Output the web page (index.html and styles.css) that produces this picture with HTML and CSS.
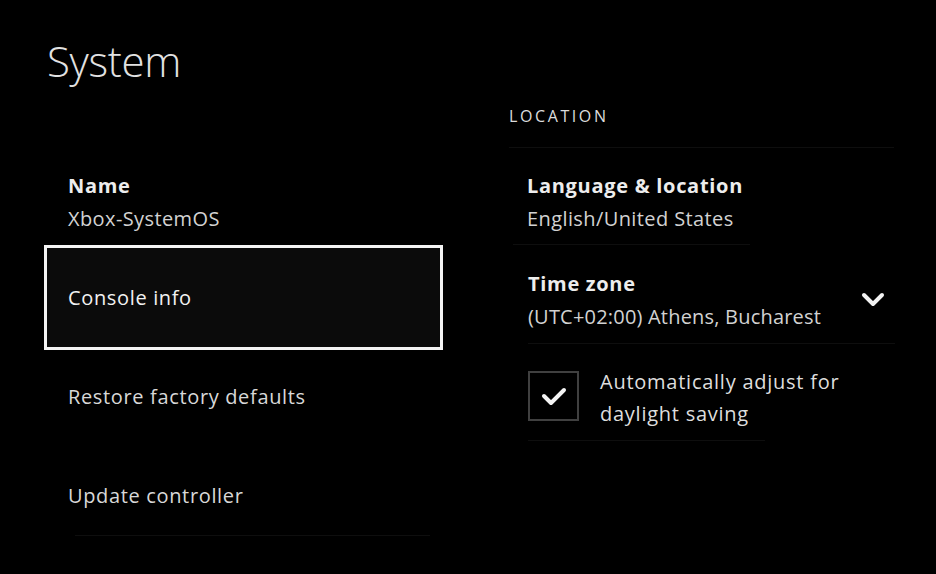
FILE: index.html
```html
<!DOCTYPE html>
<html lang="en">
<head>
<meta charset="utf-8">
<title>System</title>
<link rel="stylesheet" href="styles.css">
</head>
<body>
<div class="page">
  <div class="col-left">
    <h1 class="title">System</h1>
    <div class="field">
      <div class="label">Name</div>
      <div class="value">Xbox-SystemOS</div>
    </div>
    <div class="menu">
      <div class="menu-item focused">Console info</div>
      <div class="menu-item">Restore factory defaults</div>
      <div class="menu-item">Update controller</div>
    </div>
    <div class="sep sep-left"></div>
  </div>
  <div class="col-right">
    <div class="section">LOCATION</div>
    <div class="sep sep-full"></div>
    <div class="field field-right">
      <div class="label">Language &amp; location</div>
      <div class="value">English/United States</div>
    </div>
    <div class="sep sep-short"></div>
    <div class="field field-right field-drop">
      <div class="drop-text">
        <div class="label">Time zone</div>
        <div class="value">(UTC+02:00) Athens, Bucharest</div>
      </div>
      <svg class="chevron" width="24" height="16" viewBox="0 0 24 16">
        <polyline points="3,3 12,12 21,3" fill="none" stroke="#f2f2f2" stroke-width="4" stroke-linecap="round" stroke-linejoin="round"/>
      </svg>
    </div>
    <div class="sep sep-tz"></div>
    <div class="check-row">
      <div class="checkbox">
        <svg width="28" height="22" viewBox="0 0 28 22">
          <polyline points="4,11 11,18 24,5" fill="none" stroke="#f4f4f4" stroke-width="4" stroke-linecap="round" stroke-linejoin="round"/>
        </svg>
      </div>
      <div class="check-text">Automatically adjust for<br>daylight saving</div>
    </div>
    <div class="sep sep-check"></div>
  </div>
</div>
</body>
</html>
```

FILE: styles.css
```css
* { box-sizing: border-box; }
html, body {
  margin: 0;
  padding: 0;
  background: #000;
  width: 936px;
  height: 574px;
  overflow: hidden;
}
body {
  font-family: "Open Sans", "Noto Sans", sans-serif;
  color: #ececec;
}
.page {
  display: flex;
  align-items: flex-start;
  padding-left: 44px;
}
.col-left {
  width: 399px;
  display: flex;
  flex-direction: column;
}
.title {
  margin: 35px 0 0 3px;
  font-size: 42px;
  line-height: 52px;
  font-weight: 300;
  color: #e2e2e2;
  letter-spacing: -0.3px;
}
.field {
  display: flex;
  flex-direction: column;
  padding-left: 24px;
  margin-top: 82px;
}
.label {
  font-size: 20px;
  line-height: 33px;
  font-weight: 700;
  letter-spacing: 0.7px;
  color: #ededed;
}
.value {
  font-size: 20px;
  line-height: 33px;
  font-weight: 400;
  letter-spacing: 0.4px;
  color: #d2d2d2;
}
.menu {
  display: flex;
  flex-direction: column;
  margin-top: 13px;
  padding: 0 3px;
}
.menu-item {
  height: 99px;
  display: flex;
  align-items: center;
  padding-left: 21px;
  font-size: 20px;
  letter-spacing: 0.65px;
  color: #d8d8d8;
}
.menu-item.focused {
  outline: 3px solid #f4f4f4;
  background: #0b0b0b;
  color: #f2f2f2;
}
.sep {
  height: 1px;
  background: #0e0e0e;
}
.sep-left {
  margin: -10px 0 0 31px;
  width: 355px;
}
.col-right {
  margin-left: 66px;
  width: 386px;
  display: flex;
  flex-direction: column;
}
.section {
  margin-top: 106px;
  font-size: 16px;
  line-height: 20px;
  letter-spacing: 2.6px;
  color: #dcdcdc;
}
.sep-full {
  margin-top: 21px;
  width: 385px;
}
.field-right {
  margin-top: 21px;
  padding-left: 18px;
}
.sep-short {
  margin: 9px 0 0 4px;
  width: 237px;
}
.field-drop {
  flex-direction: row;
  align-items: center;
  justify-content: space-between;
  margin-top: 22px;
  padding-left: 19px;
  padding-right: 10px;
}
.drop-text {
  display: flex;
  flex-direction: column;
}
.drop-text .value {
  letter-spacing: 0.2px;
}
.sep-tz {
  margin: 10px 0 0 19px;
  width: 367px;
}
.check-row {
  display: flex;
  align-items: flex-start;
  margin-top: 22px;
  padding-left: 19px;
}
.checkbox {
  margin-top: 5px;
  width: 51px;
  height: 50px;
  border: 2px solid #404040;
  display: flex;
  align-items: center;
  justify-content: center;
}
.check-text {
  margin-left: 21px;
  font-size: 20px;
  line-height: 32px;
  letter-spacing: 0.75px;
  color: #dedede;
}
.sep-check {
  margin: 10px 0 0 19px;
  width: 237px;
}
```
